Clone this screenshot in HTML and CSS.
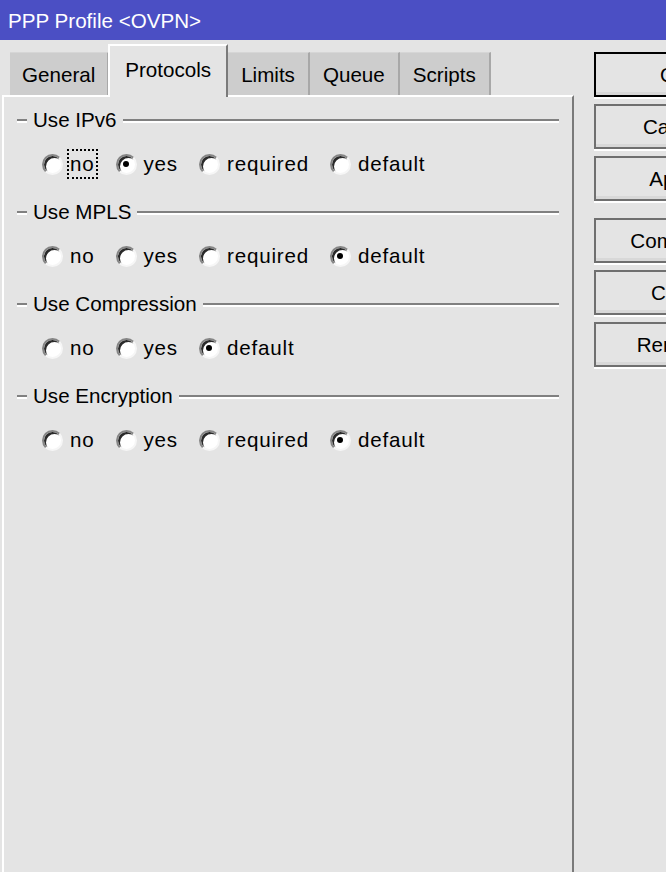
FILE: index.html
```html
<!DOCTYPE html>
<html lang="en">
<head>
<meta charset="UTF-8">
<title>PPP Profile &lt;OVPN&gt;</title>
<link rel="stylesheet" href="styles.css">
</head>
<body>
<div class="titlebar">PPP Profile &lt;OVPN&gt;</div>
<div class="main">
  <div class="left">
    <div class="tabs">
      <div class="tab">General</div>
      <div class="tab active">Protocols</div>
      <div class="tab">Limits</div>
      <div class="tab">Queue</div>
      <div class="tab">Scripts</div>
    </div>
    <div class="panel">
      <div class="group">
        <div class="group-head"><span class="line-short"></span><span class="caption">Use IPv6</span><span class="line"></span></div>
        <div class="radios">
          <label class="opt"><span class="radio"></span><span class="text focus">no</span></label>
          <label class="opt"><span class="radio checked"></span><span class="text">yes</span></label>
          <label class="opt"><span class="radio"></span><span class="text">required</span></label>
          <label class="opt"><span class="radio"></span><span class="text">default</span></label>
        </div>
      </div>
      <div class="group">
        <div class="group-head"><span class="line-short"></span><span class="caption">Use MPLS</span><span class="line"></span></div>
        <div class="radios">
          <label class="opt"><span class="radio"></span><span class="text">no</span></label>
          <label class="opt"><span class="radio"></span><span class="text">yes</span></label>
          <label class="opt"><span class="radio"></span><span class="text">required</span></label>
          <label class="opt"><span class="radio checked"></span><span class="text">default</span></label>
        </div>
      </div>
      <div class="group">
        <div class="group-head"><span class="line-short"></span><span class="caption">Use Compression</span><span class="line"></span></div>
        <div class="radios">
          <label class="opt"><span class="radio"></span><span class="text">no</span></label>
          <label class="opt"><span class="radio"></span><span class="text">yes</span></label>
          <label class="opt"><span class="radio checked"></span><span class="text">default</span></label>
        </div>
      </div>
      <div class="group">
        <div class="group-head"><span class="line-short"></span><span class="caption">Use Encryption</span><span class="line"></span></div>
        <div class="radios">
          <label class="opt"><span class="radio"></span><span class="text">no</span></label>
          <label class="opt"><span class="radio"></span><span class="text">yes</span></label>
          <label class="opt"><span class="radio"></span><span class="text">required</span></label>
          <label class="opt"><span class="radio checked"></span><span class="text">default</span></label>
        </div>
      </div>
    </div>
  </div>
  <div class="buttons">
    <div class="btn default">OK</div>
    <div class="btn">Cancel</div>
    <div class="btn">Apply</div>
    <div class="btn spaced">Comment</div>
    <div class="btn">Copy</div>
    <div class="btn">Remove</div>
  </div>
</div>
</body>
</html>
```

FILE: styles.css
```css
html, body {
  margin: 0;
  height: 100%;
  overflow: hidden;
}
body {
  font-family: "Liberation Sans", Arial, sans-serif;
  font-size: 20.6px;
  color: #000;
  background-color: #e4e4e4;
  display: flex;
  flex-direction: column;
}
.titlebar {
  height: 40px;
  line-height: 42px;
  padding-left: 8px;
  background-color: #4b4fc4;
  color: #fff;
  flex: none;
  white-space: nowrap;
}
.main {
  flex: 1;
  display: flex;
  min-height: 0;
}
.left {
  width: 572px;
  margin-left: 2px;
  flex: none;
  display: flex;
  flex-direction: column;
}
.tabs {
  display: flex;
  align-items: flex-end;
  padding-left: 8px;
  height: 55px;
  position: relative;
  z-index: 1;
}
.tab {
  height: 43px;
  line-height: 44px;
  padding: 0 13px;
  background-color: #cdcdcd;
  border-top: 1px solid #d6d6d6;
  border-right: 2px solid #a8a8a8;
  box-sizing: border-box;
}
.tab:first-child {
  padding: 0 12px;
}
.tab.active {
  height: 53px;
  line-height: 48px;
  padding: 0 15px;
  margin-left: -1px;
  margin-bottom: -2px;
  background-color: #e4e4e4;
  border-top: 2px solid #fff;
  border-left: 2px solid #fff;
  border-right: 2px solid #7a7a7a;
}
.panel {
  flex: 1;
  border-top: 2px solid #fff;
  border-left: 2px solid #fff;
  border-right: 2px solid #7a7a7a;
}
.group {
  height: 92px;
  padding: 11px 13px 0 13px;
  box-sizing: border-box;
}
.group-head {
  display: flex;
  align-items: center;
  height: 24px;
}
.line-short, .line {
  height: 2px;
  background-color: #808080;
  box-shadow: 0 2px 0 #fff;
}
.line-short {
  width: 10px;
}
.line {
  flex: 1;
}
.caption {
  padding: 0 6px;
}
.radios {
  display: flex;
  align-items: center;
  height: 24px;
  margin-top: 20px;
  padding-left: 25px;
}
.opt {
  display: flex;
  align-items: center;
  margin-right: 21px;
}
.text {
  letter-spacing: 0.8px;
}
.radio {
  width: 21px;
  height: 21px;
  box-sizing: border-box;
  border-radius: 50%;
  background-color: #fff;
  border: 2px solid;
  border-color: #858585 #f6f6f6 #f6f6f6 #858585;
  box-shadow: inset 2px 2px 0 #2a2a2a;
  margin-right: 7px;
  position: relative;
}
.radio.checked::after {
  content: "";
  position: absolute;
  left: 5px;
  top: 5px;
  width: 6px;
  height: 6px;
  border-radius: 50%;
  background-color: #000;
}
.focus {
  outline: 2px dotted #000;
  outline-offset: 1px;
}
.buttons {
  margin-left: 20px;
  padding-top: 12px;
  flex: none;
  display: flex;
  flex-direction: column;
  gap: 7px;
}
.btn {
  width: 162px;
  height: 45px;
  box-sizing: border-box;
  border: 2px solid #6f6f6f;
  background-color: #e4e4e4;
  box-shadow: 0 2px 0 #fff, inset 0 -3px 0 #d8d8d8;
  display: flex;
  align-items: center;
  justify-content: center;
  flex: none;
}
.btn.default {
  border-color: #000;
}
.btn.spaced {
  margin-top: 10px;
}
```
